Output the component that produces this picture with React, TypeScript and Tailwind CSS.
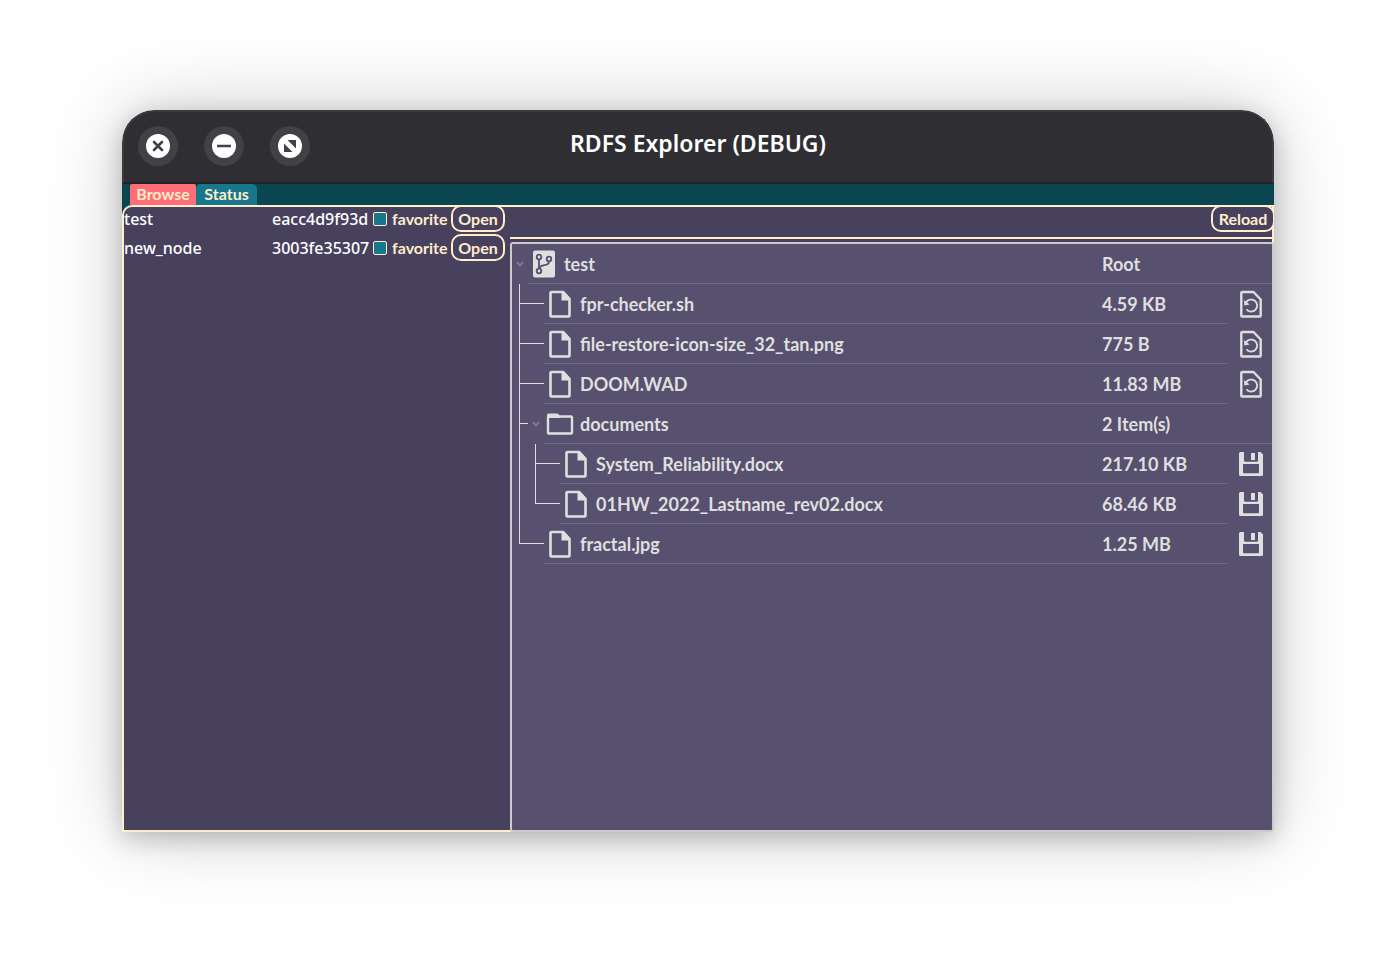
import { useState } from 'react';

type IconKind = 'root' | 'file' | 'folder';
type Action = 'restore' | 'save' | null;

interface TreeRow {
  name: string;
  size: string;
  depth: number;
  kind: IconKind;
  action: Action;
  last?: boolean;
}

const rows: TreeRow[] = [
  { name: 'test', size: 'Root', depth: 0, kind: 'root', action: null },
  { name: 'fpr-checker.sh', size: '4.59 KB', depth: 1, kind: 'file', action: 'restore' },
  { name: 'file-restore-icon-size_32_tan.png', size: '775 B', depth: 1, kind: 'file', action: 'restore' },
  { name: 'DOOM.WAD', size: '11.83 MB', depth: 1, kind: 'file', action: 'restore' },
  { name: 'documents', size: '2 Item(s)', depth: 1, kind: 'folder', action: null },
  { name: 'System_Reliability.docx', size: '217.10 KB', depth: 2, kind: 'file', action: 'save' },
  { name: '01HW_2022_Lastname_rev02.docx', size: '68.46 KB', depth: 2, kind: 'file', action: 'save', last: true },
  { name: 'fractal.jpg', size: '1.25 MB', depth: 1, kind: 'file', action: 'save', last: true },
];

const nodes = [
  { name: 'test', id: 'eacc4d9f93d' },
  { name: 'new_node', id: '3003fe35307' },
];

function RootIcon() {
  return (
    <svg width="32" height="32" viewBox="0 0 32 32" className="shrink-0" aria-hidden="true">
      <rect x="5" y="2.5" width="22" height="27" rx="2" fill="#dfdfdf" />
      <g fill="none" stroke="#57516f" strokeWidth="1.8">
        <circle cx="11" cy="9" r="2.3" />
        <circle cx="11" cy="23" r="2.3" />
        <circle cx="21" cy="11" r="2.3" />
        <path d="M11 11.3V20.7M21 13.3c-.3 3.4-2.4 3.5-5.5 4-2.6.4-4 1.3-4.5 3.4" />
      </g>
    </svg>
  );
}

function FileIcon() {
  return (
    <svg width="32" height="32" viewBox="0 0 32 32" className="shrink-0" aria-hidden="true">
      <path d="M7.5 4H19L25.5 11V27.5Q25.5 28.5 24.5 28.5H7.5Q6.5 28.5 6.5 27.5V5Q6.5 4 7.5 4Z" fill="none" stroke="#dfdfdf" strokeWidth="2.6" strokeLinejoin="round" />
      <path d="M17.5 4H19.5L26 11V12.5H17.5Z" fill="#dfdfdf" />
    </svg>
  );
}

function FolderIcon() {
  return (
    <svg width="32" height="32" viewBox="0 0 32 32" className="shrink-0" aria-hidden="true">
      <rect x="4" y="8.5" width="24" height="17" rx="1" fill="none" stroke="#dfdfdf" strokeWidth="2.4" />
      <path d="M3 10V7Q3 5.5 4.5 5.5H13Q14 5.5 14.6 6.3L16.5 8.5V10Z" fill="#dfdfdf" />
    </svg>
  );
}

function RestoreIcon() {
  return (
    <svg width="32" height="32" viewBox="0 0 32 32" aria-hidden="true">
      <path d="M7.3 4H18.5L25.7 11.5V27.5Q25.7 28.5 24.7 28.5H7.3Q6.3 28.5 6.3 27.5V5Q6.3 4 7.3 4Z" fill="none" stroke="#dfdfdf" strokeWidth="2.4" strokeLinejoin="round" />
      <path d="M11 14.5A6 6 0 1 1 11.4 21.2" fill="none" stroke="#dfdfdf" strokeWidth="1.8" />
      <path d="M9 12L9.3 17.4L14.6 16.6Z" fill="#dfdfdf" />
    </svg>
  );
}

function SaveIcon() {
  return (
    <svg width="32" height="32" viewBox="0 0 32 32" aria-hidden="true">
      <path
        fillRule="evenodd"
        fill="#dfdfdf"
        d="M5.5 4H9V12.5Q9 13.800 10.300 13.800H21.700Q23 13.800 23 12.500V4H25.500L28 6.500V26.500Q28 28 26.500 28H5.500Q4 28 4 26.500V5.500Q4 4 5.500 4ZM8.700 16Q8 16 8 16.700V24.600Q8 25.300 8.700 25.300H23.300Q24 25.300 24 24.600V16.700Q24 16 23.300 16Z"
      />
      <rect x="16" y="5" width="4" height="7" fill="#dfdfdf" />
    </svg>
  );
}

function Guides({ row }: { row: TreeRow }) {
  if (row.depth === 0) return null;
  const hasToggle = row.kind === 'folder';
  const width = row.depth * 16 + (hasToggle ? 0 : 16);
  const x = row.depth * 16 - 8.5;
  return (
    <svg width={width} height="40" className="shrink-0" fill="none" stroke="#dfdfdf" aria-hidden="true">
      {row.depth === 2 && <path d="M7.5 0V40" />}
      <path d={`M${x} 0V${row.last ? 20 : 40}M${x} 19.5H${width}`} />
    </svg>
  );
}

function Toggle({ label }: { label: string }) {
  return (
    <button type="button" aria-label={label} className="flex h-10 w-4 shrink-0 items-center justify-center">
      <svg width="8" height="6" viewBox="0 0 8 6" fill="none" stroke="#7d7890" strokeWidth="2">
        <path d="M.7 1L4 4.3L7.3 1" />
      </svg>
    </button>
  );
}

function WindowButton({ label, children }: { label: string; children: React.ReactNode }) {
  return (
    <button type="button" aria-label={label} className="flex size-10 items-center justify-center rounded-full bg-[#424145]">
      <svg width="24" height="24" viewBox="0 0 24 24">
        <circle cx="12" cy="12" r="12" fill="#fff" />
        {children}
      </svg>
    </button>
  );
}

function NodeRow({ name, id }: { name: string; id: string }) {
  const [favorite, setFavorite] = useState(false);
  return (
    <li className="flex h-[29px] items-center">
      <span className="w-[148px] font-['Noto_Sans',sans-serif] font-medium text-white">{name}</span>
      <span className="w-[101px] font-['Noto_Sans',sans-serif] font-medium text-white">{id}</span>
      <label className="flex w-[78px] items-center gap-[5px] font-bold whitespace-nowrap">
        <input
          type="checkbox"
          checked={favorite}
          onChange={(e) => setFavorite(e.target.checked)}
          className="size-[14px] shrink-0 appearance-none rounded-[2px] border border-[#ffedcb] bg-[#17778d] checked:bg-[#ff6e76]"
        />
        favorite
      </label>
      <button type="button" className="h-[27px] w-[54px] shrink-0 rounded-[10px] border-2 border-[#ffedcb] font-bold leading-none">
        Open
      </button>
    </li>
  );
}

export default function App() {
  return (
    <div className="flex min-h-screen flex-col bg-white px-[122px] pt-[110px] pb-[134px] font-['Lato',sans-serif] text-base text-[#ffedcb]">
      <div className="flex flex-1 flex-col overflow-hidden rounded-t-[32px] shadow-[0_6px_24px_rgba(0,0,0,0.22),0_0_80px_rgba(0,0,0,0.2)]">
        <header className="grid h-[74px] grid-cols-[1fr_auto_1fr] items-center rounded-t-[32px] border-2 border-[#3b3b3f] border-b-[#222127] bg-[#2f2e33] px-[14px] pb-0.5">
          <div className="flex gap-[26px]">
            <WindowButton label="Close">
              <path d="M8 8L16 16M16 8L8 16" stroke="#424145" strokeWidth="2.6" strokeLinecap="round" />
            </WindowButton>
            <WindowButton label="Minimize">
              <path d="M5 12H19" stroke="#424145" strokeWidth="2.6" />
            </WindowButton>
            <WindowButton label="Maximize">
              <path d="M9.5 6H18V14.5ZM6 9.5V18H14.5Z" fill="#424145" />
            </WindowButton>
          </div>
          <h1 className="pb-1.5 font-['Noto_Sans',sans-serif] text-[23px] font-semibold text-white">RDFS Explorer (DEBUG)</h1>
        </header>

        <nav className="flex h-[21px] bg-[#0a4552] pl-2 font-bold leading-[21px]">
          <button type="button" className="w-[66px] rounded-t-[2px] bg-[#ff6e76] pb-0.5 leading-[19px]">Browse</button>
          <button type="button" className="w-[61px] rounded-t-[5px] bg-[#17778d] pb-0.5 leading-[19px]">Status</button>
        </nav>

        <div className="flex flex-1 flex-col bg-[#0a4552]">
          <main className="flex flex-1 rounded-tl-[10px] border-2 border-[#ffedcb] bg-[#47415e]">
            <ul className="-mt-[3px] w-[386px] shrink-0">
              {nodes.map((n) => (
                <NodeRow key={n.name} name={n.name} id={n.id} />
              ))}
            </ul>
            <section className="-mr-0.5 -mb-0.5 flex flex-1 flex-col">
              <div className="mr-0.5 flex h-8 justify-end border-b-2 border-[#ffedcb]">
                <button type="button" className="-mt-0.5 -mr-[3px] h-[27px] w-16 rounded-[10px] border-2 border-[#ffedcb] bg-[#47415e] font-bold leading-none">
                  Reload
                </button>
              </div>
              <div className="mt-[3px] flex-1 rounded-[3px] border-2 border-[#cbcbcb] bg-[#57516f] font-bold text-[#dfdfdf]">
                <table className="w-full table-fixed border-separate border-spacing-0 text-lg">
                  <colgroup>
                    <col />
                    <col className="w-[125px]" />
                    <col className="w-[45px]" />
                  </colgroup>
                  <tbody>
                    {rows.map((row) => {
                      const line = row.action ? '' : 'border-b border-[#6e6983]';
                      return (
                        <tr key={row.name}>
                          <td className="p-0">
                            <div className="flex h-10">
                              <Guides row={row} />
                              {row.kind !== 'file' && <Toggle label={`Collapse ${row.name}`} />}
                              <div className="flex flex-1 items-center gap-1 border-b border-[#6e6983]">
                                {row.kind === 'root' && <RootIcon />}
                                {row.kind === 'file' && <FileIcon />}
                                {row.kind === 'folder' && <FolderIcon />}
                                <span className="whitespace-nowrap">{row.name}</span>
                              </div>
                            </div>
                          </td>
                          <td className="border-b border-[#6e6983] p-0">{row.size}</td>
                          <td className={`p-0 ${line}`}>
                            {row.action && (
                              <button type="button" aria-label={`${row.action} ${row.name}`} className="ml-2 block">
                                {row.action === 'restore' ? <RestoreIcon /> : <SaveIcon />}
                              </button>
                            )}
                          </td>
                        </tr>
                      );
                    })}
                  </tbody>
                </table>
              </div>
            </section>
          </main>
        </div>
      </div>
    </div>
  );
}
